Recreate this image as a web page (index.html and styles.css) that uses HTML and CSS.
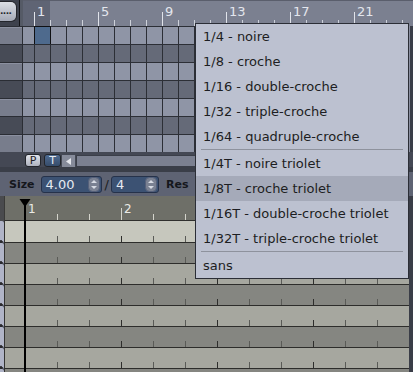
FILE: index.html
```html
<!DOCTYPE html>
<html>
<head>
<meta charset="utf-8">
<link rel="stylesheet" href="styles.css">
</head>
<body>
<div class="app">
  <div class="top">
    <div class="corner"><div class="dots-btn">....</div></div>
    <div class="ruler">
      <span class="bar-label">1</span><span class="bar-label">5</span><span class="bar-label">9</span><span class="bar-label">13</span><span class="bar-label">17</span><span class="bar-label">21</span>
    </div>
    <div class="keys">
      <div class="key l"></div><div class="key d"></div><div class="key l"></div><div class="key d"></div><div class="key l"></div><div class="key d"></div><div class="key l"></div>
    </div>
    <div class="pattern">
      <div class="prow l"><div class="cell-on"></div></div>
      <div class="prow d"></div>
      <div class="prow l"></div>
      <div class="prow d"></div>
      <div class="prow l"></div>
      <div class="prow d"></div>
      <div class="prow l"></div>
    </div>
    <div class="vscroll"></div>
  </div>

  <div class="ptbar">
    <div class="pt p">P</div>
    <div class="pt t">T</div>
    <div class="hs-arrow"><svg width="5" height="7" viewBox="0 0 5 7"><polygon points="5,0 5,7 0,3.5" fill="#e4e6ec"/></svg></div>
    <div class="hs-track"></div>
  </div>
  <div class="gap"></div>

  <div class="toolbar">
    <span class="tlabel">Size</span>
    <div class="spin s1"><span class="val">4.00</span><span class="arrows"><svg width="12" height="15" viewBox="0 0 12 15"><rect x="0.5" y="0.5" width="11" height="14" rx="4" fill="#7a8192" stroke="#56607a"/><polygon points="3,6 9,6 6,3" fill="#d8dce4"/><polygon points="3,9 9,9 6,12" fill="#d8dce4"/></svg></span></div>
    <span class="slash">/</span>
    <div class="spin s2"><span class="val">4</span><span class="arrows"><svg width="12" height="15" viewBox="0 0 12 15"><rect x="0.5" y="0.5" width="11" height="14" rx="4" fill="#7a8192" stroke="#56607a"/><polygon points="3,6 9,6 6,3" fill="#d8dce4"/><polygon points="3,9 9,9 6,12" fill="#d8dce4"/></svg></span></div>
    <span class="tlabel res">Res</span>
  </div>

  <div class="song">
    <div class="srow rrow">
      <div class="rkey"></div>
      <div class="sruler"><span class="slabel">1</span><span class="slabel">2</span></div>
      <div class="sstrip"></div>
    </div>
    <div class="srow first"><div class="skey"></div><div class="lane sel"></div><div class="sstrip"></div></div>
    <div class="srow"><div class="skey"></div><div class="lane d"></div><div class="sstrip"></div></div>
    <div class="srow"><div class="skey"></div><div class="lane l"></div><div class="sstrip"></div></div>
    <div class="srow"><div class="skey"></div><div class="lane d"></div><div class="sstrip"></div></div>
    <div class="srow"><div class="skey"></div><div class="lane l"></div><div class="sstrip"></div></div>
    <div class="srow"><div class="skey"></div><div class="lane d"></div><div class="sstrip"></div></div>
    <div class="srow"><div class="skey"></div><div class="lane l"></div><div class="sstrip"></div></div>
    <div class="srow"><div class="skey"></div><div class="lane d"></div><div class="sstrip"></div></div>
    <svg class="playhead" width="12" height="180" viewBox="0 0 12 180"><polygon points="0.5,0 11.5,0 6,8" fill="#000"/><rect x="5" y="0" width="2" height="180" fill="#000"/></svg>
  </div>

  <div class="menu">
    <div class="mi">1/4 - noire</div>
    <div class="mi">1/8 - croche</div>
    <div class="mi">1/16 - double-croche</div>
    <div class="mi">1/32 - triple-croche</div>
    <div class="mi">1/64 - quadruple-croche</div>
    <div class="msep"></div>
    <div class="mi">1/4T - noire triolet</div>
    <div class="mi hl">1/8T - croche triolet</div>
    <div class="mi">1/16T - double-croche triolet</div>
    <div class="mi">1/32T - triple-croche triolet</div>
    <div class="msep"></div>
    <div class="mi">sans</div>
  </div>
</div>
</body>
</html>
```

FILE: styles.css
```css
* { box-sizing: border-box; }
html, body { margin: 0; padding: 0; }
body { background: #3c404b; }

.app {
  position: relative;
  width: 413px;
  height: 372px;
  overflow: hidden;
  background: #3c404b;
  font-family: "DejaVu Sans", sans-serif;
}

/* ---------- pattern editor (top) ---------- */
.top {
  display: grid;
  grid-template-columns: 23px 386px 4px;
  grid-template-rows: 26px 126px;
}
.corner {
  grid-row: 1;
  grid-column: 1;
  padding-top: 1px;
  background: linear-gradient(to right, #3e424d 0 19px, #121317 19px 20px, #555a66 20px);
}
.dots-btn {
  width: 17px;
  height: 21px;
  border: 1px solid #24262c;
  border-left: 0;
  border-radius: 0 6px 6px 0;
  background: linear-gradient(#dcdfe6, #a4a9b6);
  font-weight: bold;
  font-size: 9px;
  line-height: 18px;
  color: #23252b;
  letter-spacing: -0.6px;
  white-space: nowrap;
  overflow: hidden;
}
.ruler {
  grid-row: 1;
  grid-column: 2 / 4;
  display: flex;
  padding: 4px 0 0 14px;
  background:
    linear-gradient(to right, #e0e3ea 0 1px, transparent 1px) 11px 100% / 64px 14px repeat-x,
    linear-gradient(to right, #cdd1da 0 1px, transparent 1px) 11px 100% / 16px 6px repeat-x,
    linear-gradient(#5a5e6c, #5a5e6c) 0 0 / 100% 1px no-repeat,
    linear-gradient(to right, #5f6474 0 27px, transparent 27px) 0 0 / 100% 100% no-repeat,
    #7b8090;
}
.bar-label {
  flex: none;
  width: 64px;
  font-size: 13px;
  line-height: 15px;
  color: #e3e6ed;
}
.keys {
  grid-row: 2;
  grid-column: 1;
  display: flex;
  flex-direction: column;
  border-right: 1px solid #2a2d34;
}
.key {
  height: 18px;
  border-top: 1px solid #2a2d34;
}
.key.l { background: #787d8c; box-shadow: inset 0 1px 0 #8b90a0; }
.key.d { background: #474b56; }

.pattern {
  grid-row: 2;
  grid-column: 2;
  display: flex;
  flex-direction: column;
}
.prow {
  position: relative;
  height: 18px;
  border-top: 1px solid #2c2f36;
  background: linear-gradient(to right, #2c2f36 0 1px, transparent 1px) 11px 0 / 16px 100% repeat-x;
}
.prow.l { background-color: #8f95a6; }
.prow.d { background-color: #656a78; }
.cell-on {
  position: absolute;
  left: 11px;
  top: -1px;
  width: 17px;
  height: 19px;
  border: 1px solid #0f1013;
  background: #4e6a8d;
}
.vscroll {
  grid-row: 2;
  grid-column: 3;
  background: #3a3e48;
  border-left: 1px solid #8a8fa0;
}

/* ---------- P / T bar ---------- */
.ptbar {
  height: 15px;
  display: flex;
  align-items: flex-start;
  padding: 2px 4px 0 25px;
  background: #444854;
}
.pt {
  width: 16px;
  height: 13px;
  border: 1px solid #22252b;
  border-radius: 3px;
  font-size: 11px;
  line-height: 11px;
  text-align: center;
}
.pt.p { background: linear-gradient(#e0e3ea, #aeb2be); color: #1e2026; }
.pt.t { width: 17px; margin-left: 3px; background: linear-gradient(#4f6b91, #364c6a); color: #e8ecf2; }
.hs-arrow {
  width: 13px;
  height: 12px;
  margin: 1px 0 0 1px;
  background: #868b9a;
  display: flex;
  align-items: center;
  justify-content: center;
}
.hs-track {
  flex: 1;
  height: 12px;
  margin: 1px 0 0 1px;
  background: #7b8090;
  border: 1px solid #3a3e48;
}
.gap { height: 5px; background: #3a3e48; }

/* ---------- toolbar ---------- */
.toolbar {
  height: 24px;
  display: flex;
  align-items: center;
  padding-left: 9px;
  background: #5e6373;
}
.tlabel {
  font-weight: bold;
  font-size: 11px;
  color: #15171c;
}
.res { margin-left: 7px; }
.spin {
  height: 17px;
  display: flex;
  align-items: center;
  justify-content: space-between;
  padding: 0 1px 0 4px;
  background: #3c5273;
  border: 1px solid #26324a;
  border-radius: 3px;
}
.s1 { width: 61px; margin-left: 6px; }
.s2 { width: 48px; }
.val {
  font-size: 13px;
  line-height: 15px;
  color: #e6eaf1;
}
.arrows { display: flex; }
.slash {
  font-size: 13px;
  margin: 0 2px 0 3px;
  color: #1b1d22;
}

/* ---------- song editor (bottom) ---------- */
.song { position: relative; }
.srow { display: flex; height: 21px; }
.srow.rrow { height: 25px; }
.srow.first { height: 22px; }
.rkey { width: 4px; background: #4a4b4e; }
.skey {
  width: 4px;
  border-radius: 0 2px 2px 0;
  background:
    radial-gradient(circle at 1px calc(100% - 1px), #2a2a2e 0 1.5px, transparent 2px),
    #b0b4c7;
}
.sruler {
  flex: 1;
  display: flex;
  padding: 6px 0 0 23px;
  border-left: 1px solid #3a3a38;
  border-bottom: 1px solid #2f2f2d;
  background:
    linear-gradient(to right, #d4d4cc 0 1px, transparent 1px) 20px 100% / 96px 12px repeat-x,
    linear-gradient(to right, #d4d4cc 0 1px, transparent 1px) 20px 100% / 32px 6px repeat-x,
    #6e6f68;
}
.slabel {
  flex: none;
  width: 96px;
  font-size: 12px;
  line-height: 14px;
  color: #ebebe6;
}
.lane {
  flex: 1;
  border-left: 1px solid #333331;
  border-bottom: 1px solid #2d2d2b;
  background:
    linear-gradient(to right, #2e2e2c 0 1px, transparent 1px) 20px 100% / 96px 6px repeat-x,
    linear-gradient(to right, #5a5b57 0 1px, transparent 1px) 20px 100% / 32px 6px repeat-x;
}
.lane.sel { background-color: #c6c7bd; }
.lane.l { background-color: #a6a79f; }
.lane.d { background-color: #858681; }
.sstrip { width: 4px; background: #3a3d47; }
.playhead {
  position: absolute;
  left: 19px;
  top: 3px;
}

/* ---------- popup menu ---------- */
.menu {
  position: absolute;
  left: 195px;
  top: 23px;
  width: 214px;
  background: #bcc1d0;
  border: 1px solid #2b2e36;
}
.mi {
  height: 25px;
  line-height: 25px;
  padding-left: 7px;
  font-size: 13px;
  color: #1d1e22;
  white-space: nowrap;
}
.mi.hl { background: #a5aab9; }
.msep {
  height: 2px;
  margin: 0 5px;
  border-top: 1px solid #8e929d;
}
```
